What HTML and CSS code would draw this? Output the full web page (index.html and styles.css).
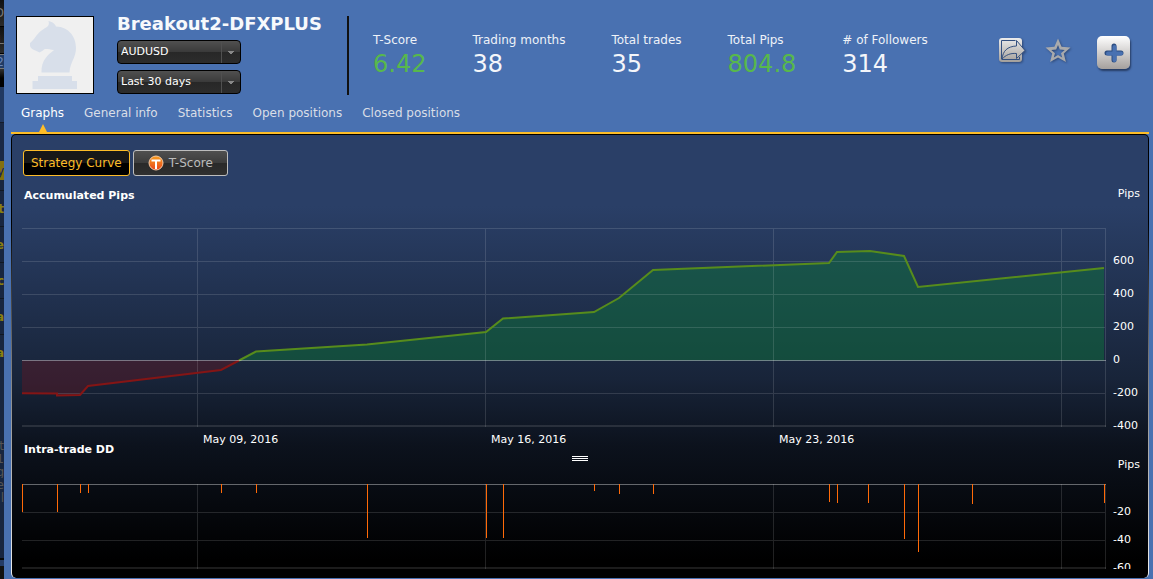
FILE: index.html
```html
<!DOCTYPE html>
<html lang="en">
<head>
<meta charset="utf-8">
<title>Breakout2-DFXPLUS</title>
<link rel="stylesheet" href="styles.css">
</head>
<body>
<div class="backdrop" aria-hidden="true">
  <span class="bd-top">D</span><span class="bd-top">L</span><span class="bd-box">2</span><span class="bd-black"></span>
  <span class="bd-blue"></span><span class="bd-tag">y</span>
  <span class="bd-row">t</span><span class="bd-row">e</span><span class="bd-row">c</span><span class="bd-row">a</span><span class="bd-row">a</span>
  <span class="bd-gap"></span>
  <span class="bd-note">t</span><span class="bd-note">1</span><span class="bd-note">g</span><span class="bd-note">e</span><span class="bd-note">l</span>
  <span class="bd-end"></span>
</div>
<main class="dialog">
  <header class="header">
    <div class="avatar">
      <svg viewBox="0 0 76 76" width="76" height="76">
        <path fill="#d8dfea" d="M31.500 4C36 5 38 7 39 9.500C52 10 59 20 59 31C59 41 53 45 52.500 55.500H24.500C24 43 31 38 37 33C31 32.500 28 31 26 33.500L22.500 35.500L19.500 34C16 33 13.500 31 13 29V26C18 22 20 16 26 12.500C30 10 33 9 31.500 4Z"/>
        <path fill="#d8dfea" d="M21 59H55V64H60V72H15.500V64H21Z"/>
      </svg>
    </div>
    <div class="identity">
      <h1 class="name">Breakout2-DFXPLUS</h1>
      <select class="picker" aria-label="Instrument"><option>AUDUSD</option></select>
      <select class="picker" aria-label="Period"><option>Last 30 days</option></select>
    </div>
    <dl class="stats">
      <div><dt>T-Score</dt><dd class="good">6.42</dd></div>
      <div><dt>Trading months</dt><dd>38</dd></div>
      <div><dt>Total trades</dt><dd>35</dd></div>
      <div><dt>Total Pips</dt><dd class="good">804.8</dd></div>
      <div><dt># of Followers</dt><dd>314</dd></div>
    </dl>
    <div class="actions">
      <button class="icon-btn" aria-label="Share">
        <svg width="28" height="28" viewBox="0 0 28 28">
          <defs><linearGradient id="silver" gradientUnits="userSpaceOnUse" x1="0" y1="1" x2="0" y2="25"><stop offset="0" stop-color="#ececec"/><stop offset="1" stop-color="#a39f9b"/></linearGradient></defs>
          <rect x="1" y="1" width="23" height="24" rx="3" fill="url(#silver)"/>
          <path fill="none" stroke="#34507f" d="M17.500 3.500H3.500V22.500"/>
          <path fill="none" stroke="#34507f" d="M4 22.500H21.500V20"/>
          <path fill="url(#silver)" stroke="#34507f" d="M4 22C5 14 9 9.500 18.500 9V3.500L27 13.500L18.500 21.500V16.500C12 16 8 18 4 22Z"/>
        </svg>
      </button>
      <button class="icon-btn" aria-label="Favorite">
        <svg width="26" height="26" viewBox="0 0 26 26">
          <path fill="#a9aaac" fill-rule="evenodd" d="M13 .5L16.600 8.800L25.500 9.600L18.800 15.500L20.900 24L13 19.600L5.100 24L7.200 15.500L.5 9.600L9.400 8.800ZM13 7L11.200 11.500L6.300 12L10 15.200L8.800 19.400L13 17L17.200 19.400L16 15.200L19.700 12L14.800 11.500Z"/>
        </svg>
      </button>
      <button class="add-btn" aria-label="Add">
        <svg width="20" height="20" viewBox="0 0 20 20"><path d="M10 3V17M3 10H17" stroke="#2c4d80" stroke-width="5" stroke-linecap="round"/><path d="M10.500 4V17M4 10.500H17" stroke="#4971b1" stroke-width="4" stroke-linecap="round"/></svg>
      </button>
    </div>
  </header>
  <nav class="tabs">
    <a class="tab active" href="#graphs">Graphs</a>
    <a class="tab" href="#general">General info</a>
    <a class="tab" href="#statistics">Statistics</a>
    <a class="tab" href="#open">Open positions</a>
    <a class="tab" href="#closed">Closed positions</a>
  </nav>
  <section class="panel" id="graphs">
    <div class="modes">
      <button class="mode selected">Strategy Curve</button>
      <button class="mode tscore">
        <svg width="16" height="16" viewBox="0 0 16 16"><defs><linearGradient id="coin" x1="0" y1="0" x2="0" y2="1"><stop offset="0" stop-color="#f9a01f"/><stop offset="1" stop-color="#e8451c"/></linearGradient></defs><circle cx="8" cy="8" r="7" fill="url(#coin)" stroke="#f3c9a5"/><path d="M3.500 5.500H12.500M8 5V14" stroke="#fff" stroke-width="2"/></svg>
        T-Score
      </button>
    </div>
    <div class="chart-head"><h2>Accumulated Pips</h2><span class="unit">Pips</span></div>
    <div class="chart">
      <svg class="plot curve" viewBox="0 0 1084 199" preserveAspectRatio="none">
        <path class="gain" d="M217 132.500L234 123.500L345 116.500L464 104L481 90.500L572 84L597 70L631 42L807 35L815 24L848 23L882 28L896 59L1082 40V132.500Z"/>
        <path class="loss" d="M0 132.500V165.300L35 165.500V167.500L58 167L66 158L199 142L217 132.500Z"/>
        <path class="grid" d="M0 .5H1084M0 33.500H1084M0 66.500H1084M0 99.500H1084M0 165.500H1084M175.500 0V199M463.500 0V199M751.500 0V199M1039.500 0V199M1083.500 0V199"/>
        <path class="grid base" d="M0 198H1084"/>
        <path class="loss-line" d="M0 165.300L35 165.500V167.500L58 167L66 158L199 142L217 132.500"/>
        <path class="gain-line" d="M217 132.500L234 123.500L345 116.500L464 104L481 90.500L572 84L597 70L631 42L807 35L815 24L848 23L882 28L896 59L1082 40"/>
        <path class="zero" d="M0 132.500H1084"/>
      </svg>
      <ul class="axis main-axis"><li>600</li><li>400</li><li>200</li><li>0</li><li>-200</li><li>-400</li></ul>
      <div class="dates"><span></span><span>May 09, 2016</span><span>May 16, 2016</span><span>May 23, 2016</span></div>
    </div>
    <h2 class="dd-title">Intra-trade DD</h2>
    <div class="dd-head">
      <div class="handle"></div>
      <span class="unit">Pips</span>
    </div>
    <div class="chart">
      <svg class="plot drawdown" viewBox="0 0 1084 85" preserveAspectRatio="none">
        <path class="grid" d="M0 28.500H1084M0 56.500H1084M175.500 0V85M463.500 0V85M751.500 0V85M1039.500 0V85M1083.500 0V85"/>
        <path class="grid base" d="M0 84H1084"/>
        <path class="zero" d="M0 .5H1084"/>
        <path class="bars" d="M.5 0V28M35.500 0V28M58.500 0V9M66.500 0V9M199.500 0V9M234.500 0V9M345.500 0V54M464.500 0V54M481.500 0V54M572.500 0V7M597.500 0V10M631.500 0V10M807.500 0V18M815.500 0V19M846.500 0V19M882.500 0V55M896.500 0V68M950.500 0V20M1082.500 0V19"/>
      </svg>
      <ul class="axis dd-axis"><li>-20</li><li>-40</li><li>-60</li></ul>
    </div>
  </section>
</main>
</body>
</html>
```

FILE: styles.css
```css
* { box-sizing: border-box; }
body {
  margin: 0;
  display: flex;
  height: 100vh;
  overflow: hidden;
  background: #4971b1;
  color: #fff;
  font-family: "DejaVu Sans", Verdana, sans-serif;
  font-size: 11px;
}
h1, h2, dl, dd, ul { margin: 0; padding: 0; }
button, select { font: inherit; }

/* Sliver of the application behind the dialog */
.backdrop {
  flex: 0 0 4px;
  display: flex;
  flex-direction: column;
  overflow: hidden;
  background: #182640;
  font-size: 12px;
}
.backdrop span { flex: none; display: flex; align-items: center; justify-content: flex-end; overflow: hidden; }
.bd-top { height: 27px; background: linear-gradient(#111, #2b2b2b); color: #777; border-bottom: 1px solid #000; }
.bd-box { height: 15px; background: #213b66; color: #6785b8; border: solid #777; border-width: 1px 0; }
.bd-black { height: 18px; background: linear-gradient(#333, #000 50%); }
.bd-blue { height: 74px; background: linear-gradient(#213961 35px, #111 35px, #1a2944 36px); }
.bd-tag { height: 19px; margin-bottom: 10px; background: #84700e; color: #182060; }
.bd-row { height: 36px; border-top: 1px solid #101722; color: #89800f; font-weight: bold; }
.bd-gap { height: 69px; }
.bd-note { height: 13px; color: #555; }
.bd-end { height: 80px; background: linear-gradient(#182640 54px, #080808 54px, #080808 56px, #243c66 56px, #243c66 62px, #111 62px); }

.dialog { flex: 1; min-width: 0; padding: 16px 4px 0 7px; background: #4971b1; }

.header { display: flex; align-items: flex-start; padding: 0 19px 0 5px; }
.avatar { width: 78px; height: 78px; border: 1px solid #000; background: #f0f0f0; }
.avatar svg { display: block; }
.identity { width: 230px; margin-left: 23px; display: flex; flex-direction: column; gap: 6px; align-items: flex-start; }
.name { font-size: 18px; line-height: 16px; white-space: nowrap; color: #f7f9fc; margin-bottom: 2px; }
.picker {
  appearance: none;
  width: 124px;
  height: 24px;
  padding: 0 24px 1px 3px;
  border: 1px solid #000;
  border-radius: 4px;
  color: #fff;
  background:
    linear-gradient(to bottom right, #888 50%, transparent 50%) right 6px top 10px / 3px 4px no-repeat,
    linear-gradient(to bottom left, #888 50%, transparent 50%) right 9px top 10px / 3px 4px no-repeat,
    linear-gradient(#505050, #505050) right 18px top / 1px 100% no-repeat,
    linear-gradient(#505050, #3a3a3a 50%, #272727 50%, #2d2d2d);
}
.stats { display: flex; gap: 46px; height: 79px; padding: 16px 0 0 24px; border-left: 2px solid #111; white-space: nowrap; }
.stats dt { font-size: 12px; line-height: 16px; color: #eef2f8; }
.stats dd { font-size: 24px; line-height: 32px; color: #f4f6fa; }
.stats .good { color: #58b84c; }
.actions { display: flex; align-items: center; gap: 19px; margin-left: auto; padding-top: 20px; }
.icon-btn { display: flex; margin-top: -4px; padding: 0; border: 0; background: none; filter: drop-shadow(1px 1px 1px #2d4775); }
.add-btn {
  display: grid;
  place-items: center;
  width: 33px;
  height: 33px;
  margin-left: 7px;
  padding: 0;
  border: 0;
  border-radius: 5px;
  background: linear-gradient(#fff, #a5a09d);
  box-shadow: 1px 2px 2px #263c64;
}

.tabs { display: flex; gap: 20px; height: 39px; padding: 0 10px; border-bottom: 2px solid #fdbd28; }
.tab { position: relative; padding-top: 10px; font-size: 12px; line-height: 16px; color: #d9dee7; text-decoration: none; white-space: nowrap; }
.tab.active { color: #fff; }
.tab.active::after {
  content: "";
  position: absolute;
  bottom: 0;
  left: 50%;
  margin-left: -4px;
  border: solid transparent;
  border-width: 0 4px 8px;
  border-bottom-color: #fdbd28;
}

.panel {
  padding: 15px 0 9px 10px;
  border: 1px solid transparent;
  border-bottom: 0;
  border-radius: 5px;
  background:
    linear-gradient(#2a3f67, #2a3f67 16%, #182439 55%, #0c121d 70%, #000 96%) padding-box,
    linear-gradient(#000 20%, #777 50%, #eee) border-box;
}
.modes { display: flex; gap: 3px; padding-left: 1px; }
.mode {
  display: flex;
  align-items: center;
  gap: 5px;
  height: 26px;
  padding: 0 7px 1px;
  border: 1px solid #bdbdbd;
  border-radius: 3px;
  font-size: 12px;
  color: #bcbcbc;
  background: linear-gradient(#505050, #3c3c3c 50%, #292929 50%, #303030);
}
.mode.tscore { padding: 0 14px 1px; }
.mode.selected { border-color: #fdbd28; color: #fdbd28; background: linear-gradient(#181818 50%, #000 50%); }

.chart-head { display: flex; justify-content: space-between; height: 52px; padding: 13px 8px 0 2px; }
h2 { font-size: 11px; line-height: 14px; }
.unit { line-height: 10px; }
.chart { display: grid; grid-template-columns: 1fr 42px; }
.plot { display: block; width: 100%; }
.curve { height: 199px; }
.drawdown { height: 85px; }
.plot path { fill: none; vector-effect: non-scaling-stroke; }
.plot .gain { fill: rgba(16, 112, 62, .52); }
.plot .loss { fill: rgba(100, 24, 36, .42); }
.gain-line { stroke: #578c1c; stroke-width: 2; }
.loss-line { stroke: #841515; stroke-width: 2; }
.grid { stroke: rgba(255, 255, 255, .13); shape-rendering: crispEdges; }
.grid.base { stroke-width: 2; stroke: rgba(255, 255, 255, .11); }
.zero { stroke: rgba(255, 255, 255, .38); shape-rendering: crispEdges; }
.bars { stroke: #ff6a08; shape-rendering: crispEdges; }
.axis { list-style: none; padding-left: 7px; }
.main-axis { grid-column: 2; grid-row: 1 / 3; height: 217px; padding-top: 16px; line-height: 33px; }
.dd-axis { height: 85px; padding-top: 14px; line-height: 28px; overflow: hidden; }
.dates { display: grid; grid-template-columns: 181fr 288fr 288fr 327fr; padding-top: 8px; line-height: 10px; white-space: nowrap; }
.dd-title { padding-left: 2px; line-height: 10px; }
.dd-head { display: grid; grid-template-columns: 1fr 16px 1fr; height: 29px; padding: 1px 10px 0 0; }
.handle { grid-column: 2; height: 5px; background: repeating-linear-gradient(#fff 0 1px, transparent 1px 2px); }
.dd-head .unit { justify-self: end; margin-right: -2px; padding-top: 4px; }
```
